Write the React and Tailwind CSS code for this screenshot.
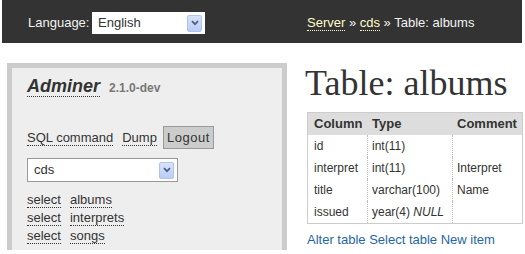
function Chevron() {
  return (
    <svg width="8" height="6" viewBox="0 0 8 6" className="block">
      <path d="M1 1.2 L4 4.2 L7 1.2" fill="none" stroke="#4d6185" strokeWidth="1.8" />
    </svg>
  );
}

function DropButton() {
  return (
    <div className="w-[15px] h-[17px] bg-gradient-to-b from-[#d8e3fb] to-[#b9cdf6] border border-[#b3c4ec] rounded-[2px] flex items-center justify-center">
      <Chevron />
    </div>
  );
}

function DotLink({ children, className = "" }) {
  return <span className={"border-b border-dotted " + className}>{children}</span>;
}

export default function App() {
  return (
    <div className="w-[525px] h-[254px] overflow-hidden bg-white text-[13px] leading-[18px] text-[#333] [font-family:'Liberation_Sans',Arial,sans-serif]">
      <header className="ml-[2px] w-[520px] h-[43px] bg-[#333] flex items-start pt-[12px] text-[#f2f2f2]">
        <div className="w-[305px] flex items-start pl-[26px]">
          <span className="w-[64px] leading-[22px]">Language:</span>
          <div className="w-[113px] h-[22px] bg-white flex items-center justify-between pl-[6px] pr-[3px] text-[#333] leading-[22px]">
            <span>English</span>
            <DropButton />
          </div>
        </div>
        <div className="leading-[22px] whitespace-nowrap">
          <DotLink className="text-[#ffffc8] border-[#ffffc8] leading-[14px]">Server</DotLink>
          <span> » </span>
          <DotLink className="text-[#ffffc8] border-[#ffffc8] leading-[14px]">cds</DotLink>
          <span> » Table: albums</span>
        </div>
      </header>
      <div className="flex items-start">
        <aside className="ml-[7px] mt-[20px] w-[280px] h-[187px] border-[5px] border-b-0 border-[#ccc] bg-[#eee] pl-[15px] pt-[8px]">
          <div className="h-[24px] leading-[24px] whitespace-nowrap">
            <span className="text-[18px] font-bold italic text-[#333] border-b border-dotted border-[#333] leading-[20px]">Adminer</span>
            <span className="ml-[9px] text-[12px] font-bold text-[#777]">2.1.0-dev</span>
          </div>
          <div className="mt-[26px] h-[23px] flex items-center whitespace-nowrap">
            <DotLink className="border-[#333] leading-[15px]">SQL command</DotLink>
            <DotLink className="ml-[9px] border-[#333] leading-[15px]">Dump</DotLink>
            <span className="ml-[6px] w-[51px] h-[23px] bg-[#ccc] border border-[#999] flex items-center justify-center tracking-[0.5px]">Logout</span>
          </div>
          <div className="mt-[9px] w-[151px] h-[24px] bg-white border border-[#999] flex items-center justify-between pl-[6px] pr-[3px]">
            <span>cds</span>
            <DropButton />
          </div>
          <div className="mt-[9px] flex flex-col">
            {["albums", "interprets", "songs"].map((t) => (
              <div key={t} className="h-[18px] whitespace-nowrap">
                <DotLink className="border-[#333] leading-[15px]">select</DotLink>
                <DotLink className="ml-[9px] border-[#333] leading-[15px]">{t}</DotLink>
              </div>
            ))}
          </div>
        </aside>
        <main className="ml-[18px] mt-[22px]">
          <h1 className="text-[36px] leading-[36px] text-[#333] whitespace-nowrap [font-family:'Liberation_Serif','Times_New_Roman',serif]">Table: albums</h1>
          <div className="ml-[2px] mt-[11px] w-[216px] border border-[#ccc]">
            <div className="flex h-[22px] bg-[#ddd] font-bold leading-[22px]">
              <div className="w-[59px] pl-[6px]">Column</div>
              <div className="w-[85px] pl-[5px]">Type</div>
              <div className="w-[70px] pl-[5px]">Comment</div>
            </div>
            {[
              ["id", "int(11)", "", false],
              ["interpret", "int(11)", "Interpret", false],
              ["title", "varchar(100)", "Name", false],
              ["issued", "year(4)", "", true],
            ].map(([c, t, m, n]) => (
              <div key={c} className="flex h-[22px] leading-[22px] text-[12px] whitespace-nowrap">
                <div className="w-[59px] pl-[6px]">{c}</div>
                <div className="w-[85px] pl-[4px] border-l border-dotted border-[#bbb]">
                  {t}
                  {n && <i> NULL</i>}
                </div>
                <div className="w-[70px] pl-[4px] border-l border-dotted border-[#bbb]">{m}</div>
              </div>
            ))}
          </div>
          <div className="ml-[2px] mt-[7px] h-[18px] text-[#1f66a5] whitespace-nowrap">
            Alter table Select table New item
          </div>
        </main>
      </div>
    </div>
  );
}
